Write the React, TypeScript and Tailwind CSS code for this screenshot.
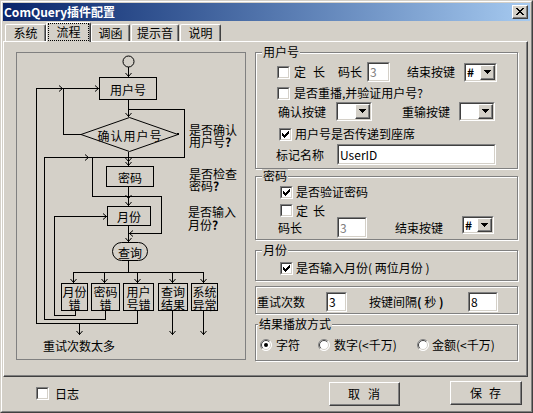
import React from "react";

const sunkenOuter = "border border-t-[#808080] border-l-[#808080] border-r-white border-b-white";
const sunkenInner = "border border-t-[#404040] border-l-[#404040] border-r-[#d4d0c8] border-b-[#d4d0c8]";
const raisedOuter = "border border-t-white border-l-white border-r-[#404040] border-b-[#404040]";
const raisedInner = "border-r border-b border-r-[#808080] border-b-[#808080]";

function Check({ checked = false, className = "" }: { checked?: boolean; className?: string }) {
  return (
    <span className={`block w-[13px] h-[13px] shrink-0 ${sunkenOuter} ${className}`}>
      <span className={`relative block w-full h-full bg-white ${sunkenInner}`}>
        {checked && (
          <svg className="absolute left-[1px] top-[1px]" width="7" height="7" viewBox="0 0 7 7" shapeRendering="crispEdges">
            <rect x="6" y="0" width="1" height="1" />
            <rect x="5" y="1" width="2" height="1" />
            <rect x="0" y="2" width="1" height="1" />
            <rect x="4" y="2" width="3" height="1" />
            <rect x="0" y="3" width="2" height="1" />
            <rect x="3" y="3" width="3" height="1" />
            <rect x="0" y="4" width="5" height="1" />
            <rect x="1" y="5" width="3" height="1" />
            <rect x="2" y="6" width="1" height="1" />
          </svg>
        )}
      </span>
    </span>
  );
}

function Radio({ checked = false, className = "" }: { checked?: boolean; className?: string }) {
  return (
    <svg className={`shrink-0 ${className}`} width="12" height="12" viewBox="0 0 12 12">
      <circle cx="6" cy="6" r="5.5" fill="#fff" />
      <path d="M2.1 9.9A5.5 5.5 0 0 1 9.9 2.1" stroke="#808080" fill="none" />
      <path d="M9.9 2.1A5.5 5.5 0 0 1 2.1 9.9" stroke="#ffffff" fill="none" />
      <path d="M2.8 9.2A4.5 4.5 0 0 1 9.2 2.8" stroke="#404040" fill="none" />
      <path d="M9.2 2.8A4.5 4.5 0 0 1 2.8 9.2" stroke="#d4d0c8" fill="none" />
      {checked && <circle cx="6" cy="6" r="2" fill="#000" />}
    </svg>
  );
}

function Edit({ className = "", value, disabled = false }: { className?: string; value: string; disabled?: boolean }) {
  return (
    <span className={`block shrink-0 ${sunkenOuter} ${className}`}>
      <span className={`flex items-center h-full bg-white pl-[1px] text-[12px] leading-[12px] ${sunkenInner} ${disabled ? "text-[#808080]" : "text-black"}`}>
        {value}
      </span>
    </span>
  );
}

function Combo({ className = "", value = "" }: { className?: string; value?: string }) {
  return (
    <span className={`block shrink-0 ${sunkenOuter} ${className}`}>
      <span className={`flex h-full bg-white ${sunkenInner}`}>
        <span className="flex-1 flex items-center pl-[1px] text-[12px] leading-[12px] font-bold">{value}</span>
        <span className={`w-[15px] h-full bg-[#d4d0c8] ${raisedOuter}`}>
          <span className={`flex items-center justify-center h-full ${raisedInner}`}>
            <svg width="7" height="4" viewBox="0 0 7 4" shapeRendering="crispEdges">
              <path d="M0 0H7V1H6V2H5V3H4V4H3V3H2V2H1V1H0Z" fill="#000" />
            </svg>
          </span>
        </span>
      </span>
    </span>
  );
}

function Group({ label, labelClass = "left-[6px]", className = "", children }: { label?: string; labelClass?: string; className?: string; children?: React.ReactNode }) {
  return (
    <div className={`relative border border-[#808080] shadow-[1px_1px_0_#ffffff,inset_1px_1px_0_#ffffff] ${className}`}>
      {label && (
        <span className={`absolute top-[-8px] bg-[#d4d0c8] px-[1px] text-[12px] leading-[14px] ${labelClass}`}>{label}</span>
      )}
      {children}
    </div>
  );
}

function Button({ className = "", children }: { className?: string; children: React.ReactNode }) {
  return (
    <div className={`h-[24px] ${raisedOuter} ${className}`}>
      <div className={`h-full flex items-center justify-center text-[12px] leading-[12px] ${raisedInner}`}>{children}</div>
    </div>
  );
}

function Tab({ label, selected = false, className = "" }: { label: string; selected?: boolean; className?: string }) {
  if (selected) {
    return (
      <div className={`relative h-[20px] -mb-[1px] bg-[#d4d0c8] border-t border-l border-r border-t-white border-l-white border-r-[#404040] rounded-t-[2px] shadow-[inset_-1px_0_0_#808080] flex items-center justify-center text-[12px] leading-[12px] ${className}`}>
        <span className="absolute left-[1px] right-[1px] top-0 bottom-[1px] border border-dotted border-black" />
        <span className="-mt-[1px]">{label}</span>
      </div>
    );
  }
  return (
    <div className={`h-[17px] border-t border-l border-r border-t-white border-l-white border-r-[#404040] rounded-t-[2px] shadow-[inset_-1px_0_0_#808080] flex items-center justify-center text-[12px] leading-[12px] ${className}`}>
      <span>{label}</span>
    </div>
  );
}

const H = (y: number, x1: number, x2: number) => `M${x1} ${y + 0.5}H${x2 + 1}`;
const V = (x: number, y1: number, y2: number) => `M${x + 0.5} ${y1}V${y2 + 1}`;
const AD = (x: number, y: number) => `M${x - 2.5} ${y - 3}L${x + 0.5} ${y + 0.5}L${x + 3.5} ${y - 3}`;
const AR = (x: number, y: number) => `M${x - 3} ${y - 2.5}L${x + 0.5} ${y + 0.5}L${x - 3} ${y + 3.5}`;
const AL = (x: number, y: number) => `M${x + 4} ${y - 2.5}L${x + 0.5} ${y + 0.5}L${x + 4} ${y + 3.5}`;

function Flow() {
  const lines = [
    V(128, 67, 76), AD(128, 76),
    H(88, 36, 98), AR(98, 88), AR(62, 88),
    V(36, 88, 323),
    V(63, 88, 134),
    H(134, 63, 81),
    V(128, 100, 116), AD(128, 116),
    H(109, 128, 184),
    V(184, 109, 157),
    V(128, 152, 165), AD(128, 161), AD(128, 165),
    H(157, 44, 184), AR(88, 157),
    V(44, 157, 319),
    V(92, 157, 196),
    V(128, 187, 205), AD(128, 198), AD(128, 205),
    H(196, 92, 161),
    V(161, 196, 233),
    H(233, 128, 161), AL(129, 233),
    H(216, 54, 106), AR(106, 216),
    V(54, 216, 315),
    V(128, 226, 241), AD(128, 241),
    V(128, 261, 272),
    H(272, 73, 203),
    ...[73, 104, 137, 172, 203].flatMap((x) => [V(x, 272, 282), AD(x, 282)]),
    V(75, 311, 315), H(315, 54, 75),
    V(105, 311, 319), H(319, 44, 105),
    V(137, 311, 323), H(323, 36, 137),
    V(79, 323, 334), AD(79, 334),
    V(172, 311, 334), AD(172, 334),
    V(203, 311, 334), AD(203, 334),
  ].join("");
  const boxes: [number, number, string, string][] = [
    [61, 26, "月份", "错"],
    [91, 28, "密码", "错"],
    [123, 30, "用户", "号错"],
    [158, 29, "查询", "结果"],
    [191, 26, "系统", "异常"],
  ];
  const ff = "'Noto Sans CJK SC', sans-serif";
  return (
    <svg width="228" height="306" viewBox="17 53 228 306" fontFamily={ff} fontSize="12">
      <circle cx="128.5" cy="61.5" r="5.5" fill="none" stroke="#000" />
      <path d={lines} stroke="#000" fill="none" />
      <rect x="99.5" y="77.5" width="57" height="22" fill="none" stroke="#000" />
      <text x="128" y="89" textAnchor="middle" dominantBaseline="central">用户号</text>
      <polygon points="81,134.5 129.5,117.5 178,134.5 129.5,151.5" fill="#d4d0c8" stroke="#000" />
      <rect x="177" y="133" width="2" height="2" fill="#000" />
      <text x="130" y="135" textAnchor="middle" dominantBaseline="central" letterSpacing="1">确认用户号</text>
      <rect x="106.5" y="166.5" width="47" height="20" fill="none" stroke="#000" />
      <text x="130" y="177" textAnchor="middle" dominantBaseline="central">密码</text>
      <rect x="107.5" y="206.5" width="43" height="19" fill="none" stroke="#000" />
      <text x="129" y="216.5" textAnchor="middle" dominantBaseline="central">月份</text>
      <rect x="112.5" y="242.5" width="35" height="18" rx="9" fill="none" stroke="#000" />
      <text x="130" y="252" textAnchor="middle" dominantBaseline="central">查询</text>
      {boxes.map(([x, w, a, b]) => (
        <g key={x}>
          <rect x={x + 0.5} y="283.5" width={w} height="27" fill="none" stroke="#000" />
          <text textAnchor="middle" dominantBaseline="central">
            <tspan x={x + w / 2 + 0.5} y="290.5">{a}</tspan>
            <tspan x={x + w / 2 + 0.5} y="303.5">{b}</tspan>
          </text>
        </g>
      ))}
      <text x="43" y="345.5" dominantBaseline="central">重试次数太多</text>
      <text dominantBaseline="central">
        <tspan x="189" y="128.5">是否确认</tspan>
        <tspan x="189" y="141">用户号</tspan>
        <tspan fontWeight="bold">?</tspan>
      </text>
      <text dominantBaseline="central">
        <tspan x="189" y="172.5">是否检查</tspan>
        <tspan x="189" y="185">密码</tspan>
        <tspan fontWeight="bold">?</tspan>
      </text>
      <text dominantBaseline="central">
        <tspan x="188" y="211">是否输入</tspan>
        <tspan x="188" y="223.5">月份</tspan>
        <tspan fontWeight="bold">?</tspan>
      </text>
    </svg>
  );
}

export default function App() {
  return (
    <div className={`w-[533px] h-[413px] bg-[#d4d0c8] text-black font-['Noto_Sans_CJK_SC',sans-serif] border border-t-[#d4d0c8] border-l-[#d4d0c8] border-r-[#404040] border-b-[#404040]`}>
      <div className="h-full border border-t-white border-l-white border-r-[#808080] border-b-[#808080] p-[1px] flex flex-col">
        {/* Title bar */}
        <div className="h-[18px] shrink-0 flex items-center bg-linear-to-r from-[#0a246a] to-[#a6caf0] pl-[1px] pr-[2px]">
          <span className="text-white font-bold text-[12px] leading-[14px]">ComQuery插件配置</span>
          <div className={`ml-auto w-[16px] h-[14px] bg-[#d4d0c8] ${raisedOuter}`}>
            <div className={`h-full flex items-center justify-center ${raisedInner}`}>
              <svg width="8" height="7" viewBox="0 0 8 7" shapeRendering="crispEdges">
                <path d="M0 0H2V1H3V2H5V1H6V0H8V1H7V2H6V3H5V4H6V5H7V6H8V7H6V6H5V5H3V6H2V7H0V6H1V5H2V4H3V3H2V2H1V1H0Z" fill="#000" />
              </svg>
            </div>
          </div>
        </div>

        {/* Tabs */}
        <div className="h-[20px] shrink-0 flex items-end relative z-10">
          <Tab label="系统" className="ml-[2px] w-[41px]" />
          <Tab label="流程" selected className="w-[45px]" />
          <Tab label="调函" className="w-[39px]" />
          <Tab label="提示音" className="ml-[1px] w-[48px]" />
          <Tab label="说明" className="ml-[1px] w-[41px]" />
        </div>

        {/* Tab panel */}
        <div className="w-[525px] h-[336px] shrink-0 border border-t-white border-l-white border-r-[#404040] border-b-[#404040]">
          <div className="h-full border-r border-b border-r-[#808080] border-b-[#808080] flex items-start pl-[12px] pt-[10px]">
            {/* Flow chart */}
            <div className="w-[230px] h-[308px] shrink-0 border border-[#808080]">
              <Flow />
            </div>

            {/* Settings column */}
            <div className="ml-[9px] w-[263px] flex flex-col text-[12px] leading-[12px]">
              <Group label="用户号" className="h-[117px]">
                <div className="mt-[9px] h-[20px] flex items-center">
                  <Check className="ml-[21px]" />
                  <span className="ml-[4px]">定</span>
                  <span className="ml-[7px]">长</span>
                  <span className="ml-[13px]">码长</span>
                  <Edit className="ml-[5px] w-[23px] h-[20px]" value="3" disabled />
                  <span className="ml-[17px]">结束按键</span>
                  <Combo className="ml-[9px] w-[33px] h-[19px]" value="#" />
                </div>
                <div className="mt-[4px] h-[14px] flex items-center">
                  <Check className="ml-[21px]" />
                  <span className="ml-[4px]">是否重播,并验证用户号?</span>
                </div>
                <div className="mt-[2px] h-[19px] flex items-center">
                  <span className="ml-[22px]">确认按键</span>
                  <Combo className="ml-[10px] w-[36px] h-[19px]" />
                  <span className="ml-[30px]">重输按键</span>
                  <Combo className="ml-[9px] w-[36px] h-[19px]" />
                </div>
                <div className="mt-[6px] h-[14px] flex items-center">
                  <Check checked className="ml-[23px]" />
                  <span className="ml-[3px]">用户号是否传递到座席</span>
                </div>
                <div className="mt-[3px] h-[21px] flex items-center">
                  <span className="ml-[20px]">标记名称</span>
                  <Edit className="ml-[13px] w-[159px] h-[21px]" value="UserID" />
                </div>
              </Group>

              <Group label="密码" className="mt-[7px] h-[64px]">
                <div className="mt-[8px] h-[14px] flex items-center">
                  <Check checked className="ml-[24px]" />
                  <span className="ml-[3px]">是否验证密码</span>
                </div>
                <div className="mt-[5px] h-[13px] flex items-center">
                  <Check className="ml-[24px]" />
                  <span className="ml-[3px]">定</span>
                  <span className="ml-[5px]">长</span>
                </div>
                <div className="h-[21px] flex items-center">
                  <span className="ml-[22px]">码长</span>
                  <Edit className="ml-[35px] w-[30px] h-[21px]" value="3" disabled />
                  <span className="ml-[28px]">结束按键</span>
                  <Combo className="ml-[19px] w-[32px] h-[18px] self-start -mt-[1px]" value="#" />
                </div>
              </Group>

              <Group label="月份" className="mt-[10px] h-[31px]">
                <div className="mt-[10px] h-[14px] flex items-center">
                  <Check checked className="ml-[24px]" />
                  <span className="ml-[3px] whitespace-pre">是否输入月份( 两位月份 )</span>
                </div>
              </Group>

              <Group className="mt-[5px] h-[28px]">
                <div className="mt-[5px] h-[20px] flex items-center">
                  <span className="ml-[1px]">重试次数</span>
                  <Edit className="ml-[21px] w-[21px] h-[20px]" value="3" />
                  <span className="ml-[22px] w-[99px] whitespace-pre">按键间隔<span className="font-bold">( </span>秒<span className="font-bold"> )</span></span>
                  <Edit className="w-[30px] h-[20px]" value="8" />
                </div>
              </Group>

              <Group label="结果播放方式" labelClass="left-[2px]" className="mt-[10px] h-[37px]">
                <div className="mt-[13px] h-[13px] flex items-center">
                  <Radio checked className="ml-[4px]" />
                  <span className="ml-[4px] w-[24px]">字符</span>
                  <Radio className="ml-[18px]" />
                  <span className="ml-[4px] w-[79px]">数字(&lt;千万)</span>
                  <Radio className="ml-[4px]" />
                  <span className="ml-[3px]">金额(&lt;千万)</span>
                </div>
              </Group>
            </div>
          </div>
        </div>

        {/* Bottom row */}
        <div className="flex-1 flex items-start text-[12px] leading-[12px]">
          <div className="ml-[33px] mt-[10px] flex items-center">
            <Check />
            <span className="ml-[6px]">日志</span>
          </div>
          <Button className="ml-auto mt-[5px] w-[71px]">
            <span>取</span>
            <span className="ml-[8px]">消</span>
          </Button>
          <Button className="ml-[50px] mr-[8px] mt-[4px] w-[72px]">
            <span>保</span>
            <span className="ml-[7px]">存</span>
          </Button>
        </div>
      </div>
    </div>
  );
}
